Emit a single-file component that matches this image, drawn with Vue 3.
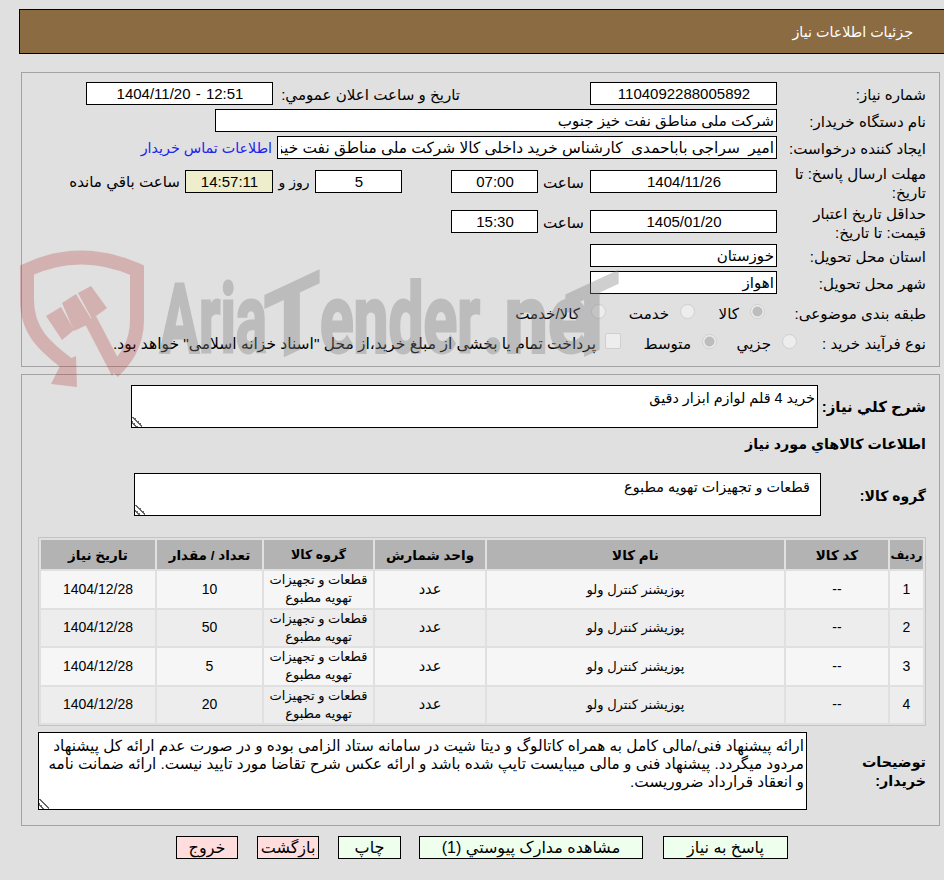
<script setup>
const rows = [
  { n: 1, qty: 10 },
  { n: 2, qty: 50 },
  { n: 3, qty: 5 },
  { n: 4, qty: 20 }
]
const creator = 'امیر  سراجی باباحمدی  کارشناس خرید داخلی کالا شرکت ملی مناطق نفت خیز جنوب'
const desc = 'خرید 4 قلم لوازم ابزار دقیق'
const group = '  قطعات و تجهیزات تهویه مطبوع'
const note = 'ارائه پیشنهاد فنی/مالی کامل به همراه کاتالوگ و دیتا شیت در سامانه ستاد الزامی بوده و در صورت عدم ارائه کل پیشنهاد مردود میگردد. پیشنهاد فنی و مالی میبایست تایپ شده باشد و ارائه عکس شرح تقاضا مورد تایید نیست. ارائه ضمانت نامه و انعقاد قرارداد ضروریست.'
</script>

<template>
  <div class="page">
    <header class="title"><span>جزئیات اطلاعات نیاز</span></header>

    <section class="panel first">
      <div class="row h27">
        <label class="lab">شماره نیاز:</label>
        <input class="fld mid w187" readonly value="1104092288005892" />
        <label class="pub">تاریخ و ساعت اعلان عمومي:</label>
        <input class="fld mid w187 stamp" readonly value="12:51 - 1404/11/20" />
      </div>
      <div class="row h27">
        <label class="lab">نام دستگاه خریدار:</label>
        <input class="fld w562" readonly value="شرکت ملی مناطق نفت خیز جنوب" />
      </div>
      <div class="row h34">
        <label class="lab">ایجاد کننده درخواست:</label>
        <input class="fld w500" readonly :value="creator" />
        <a class="contact">اطلاعات تماس خریدار</a>
      </div>
      <div class="row h40">
        <label class="lab two">مهلت ارسال پاسخ: تا تاریخ:</label>
        <input class="fld mid w187" readonly value="1404/11/26" />
        <span class="hour">ساعت</span>
        <input class="fld mid w87" readonly value="07:00" />
        <input class="fld mid w87 days" readonly value="5" />
        <span class="and">روز و</span>
        <input class="fld mid w88 remain" readonly value="14:57:11" />
        <span class="left-txt">ساعت باقي مانده</span>
      </div>
      <div class="row h34">
        <label class="lab two">حداقل تاریخ اعتبار قیمت: تا تاریخ:</label>
        <input class="fld mid w187" readonly value="1405/01/20" />
        <span class="hour">ساعت</span>
        <input class="fld mid w87" readonly value="15:30" />
      </div>
      <div class="row h27">
        <label class="lab">استان محل تحویل:</label>
        <input class="fld w187" readonly value="خوزستان" />
      </div>
      <div class="row h27">
        <label class="lab">شهر محل تحویل:</label>
        <input class="fld w187" readonly value="اهواز" />
      </div>
      <div class="row h30">
        <label class="lab lab-a">طبقه بندی موضوعی:</label>
        <span class="opt o70"><input type="radio" class="rd" disabled checked /><span>کالا</span></span>
        <span class="opt o89"><input type="radio" class="rd" disabled /><span>خدمت</span></span>
        <span class="opt"><input type="radio" class="rd" disabled /><span>کالا/خدمت</span></span>
      </div>
      <div class="row h30">
        <label class="lab lab-b">نوع فرآیند خرید :</label>
        <span class="opt o80"><input type="radio" class="rd" disabled /><span>جزيي</span></span>
        <span class="opt o96"><input type="radio" class="rd" disabled checked /><span>متوسط</span></span>
        <span class="opt"><input type="checkbox" class="cb" disabled /><span class="pay">پرداخت تمام یا بخشی از مبلغ خرید،از محل "اسناد خزانه اسلامی" خواهد بود.</span></span>
      </div>
    </section>

    <section class="panel second">
      <div class="row desc">
        <label class="blab b108">شرح کلي نياز:</label>
        <textarea class="area a1" readonly :value="desc"></textarea>
      </div>
      <h3 class="goods">اطلاعات کالاهاي مورد نياز</h3>
      <div class="row group">
        <label class="blab b105">گروه کالا:</label>
        <textarea class="area a2" readonly :value="group"></textarea>
      </div>
      <table class="items">
        <colgroup>
          <col class="c1" /><col class="c2" /><col class="c3" /><col class="c4" /><col class="c5" /><col class="c6" /><col class="c7" />
        </colgroup>
        <thead>
          <tr>
            <th class="tiny">ردیف</th><th>کد کالا</th><th>نام کالا</th><th>واحد شمارش</th><th class="narrow">گروه کالا</th><th>تعداد / مقدار</th><th>تاریخ نیاز</th>
          </tr>
        </thead>
        <tbody>
          <tr v-for="r in rows" :key="r.n">
            <td class="num">{{ r.n }}</td>
            <td class="num">--</td>
            <td>پوزیشنر کنترل ولو</td>
            <td class="unit">عدد</td>
            <td><span class="ln">قطعات و تجهیزات</span><span class="ln">تهویه مطبوع</span></td>
            <td class="num">{{ r.qty }}</td>
            <td class="num">1404/12/28</td>
          </tr>
        </tbody>
      </table>
      <div class="row notes">
        <label class="blab b119">توضیحات خریدار:</label>
        <textarea class="area a3" readonly :value="note"></textarea>
      </div>
    </section>

    <nav class="actions">
      <button class="btn green b125">پاسخ به نیاز</button>
      <button class="btn green b224">مشاهده مدارک پیوستي (1)</button>
      <button class="btn green b63">چاپ</button>
      <button class="btn red b62">بازگشت</button>
      <button class="btn red b62">خروج</button>
    </nav>

    <svg class="mark" width="944" height="880" viewBox="0 0 944 880">
      <g class="shield">
        <path class="ring" d="M70 366 C50 350 27 335 27 300 L27 270 Q80 245 137 270 L137 320 C137 345 125 360 113 372" />
        <polygon points="62,362 76,356 77,387 51,384" />
        <polygon points="46,316 61,307 74,330 62,340" />
        <polygon points="62,303 76,294 93,322 74,331" />
        <polygon points="78,293 91,286 107,308 92,319" />
        <polygon points="84,322 96,316 120,362 112,376" />
      </g>
      <g class="brand">
        <text x="160" y="352" textLength="107" lengthAdjust="spacingAndGlyphs">Aria</text>
        <text x="264" y="352" textLength="56" lengthAdjust="spacingAndGlyphs" transform="skewY(-25) translate(0 136)">T</text>
        <text x="320" y="352" textLength="160" lengthAdjust="spacingAndGlyphs">ender</text>
        <text x="482" y="352" textLength="108" lengthAdjust="spacingAndGlyphs">.ne</text>
        <text x="565" y="352" textLength="54" lengthAdjust="spacingAndGlyphs" transform="skewY(-25) translate(0 276)">T</text>
      </g>
    </svg>
  </div>
</template>

<style>
html, body { margin: 0; background: #e0e0e0; overflow: hidden; }
</style>

<style scoped>
.page {
  position: relative;
  width: 944px;
  height: 880px;
  box-sizing: border-box;
  padding-top: 9px;
  overflow: hidden;
  direction: rtl;
  background: #e0e0e0;
  color: #000;
  font-family: "Liberation Sans", "DejaVu Sans", sans-serif;
  font-size: 15.1px;
  line-height: 17px;
}
.title {
  box-sizing: border-box;
  height: 45px;
  margin-left: 19px;
  margin-right: -2px;
  border: 1px solid #000;
  background: #8b6b42;
  color: #fff;
  font-size: 14.3px;
  display: flex;
  align-items: center;
  padding-right: 32px;
  padding-top: 2px;
}
.panel {
  box-sizing: border-box;
  margin-left: 21px;
  margin-right: 4px;
  border: 1px solid #a3a3a3;
  padding-right: 13px;
}
.first { height: 295px; margin-top: 18px; padding-top: 9px; }
.second { height: 452px; margin-top: 7px; padding-top: 10px; }
.row { display: flex; align-items: flex-start; }
.h27 { height: 27px; }
.h30 { height: 30px; align-items: center; }
.h34 { height: 34px; }
.h40 { height: 40px; }
.lab { width: 149px; flex: none; box-sizing: border-box; padding-top: 4px; white-space: nowrap; }
.lab.two { padding-top: 0; margin-top: -6px; padding-left: 4px; white-space: normal; line-height: 19px; }
.lab-a { width: 161px; padding-top: 0; }
.lab-b { width: 129px; padding-top: 0; }
.fld {
  box-sizing: border-box;
  flex: none;
  height: 23px;
  border: 1px solid #000;
  background: #fff;
  color: #000;
  font: inherit;
  padding: 0 2px 0 3px;
  margin: 0;
  outline: none;
  direction: rtl;
}
.mid { text-align: center; font-size: 15px; }
.stamp { word-spacing: 1px; }
.w187 { width: 187px; }
.w562 { width: 562px; }
.w500 { width: 500px; font-size: 15.4px; }
.w87 { width: 87px; }
.w88 { width: 88px; }
.pub { margin: 4px 130px 0 6px; white-space: nowrap; width: 181px; }
.contact { color: #2222ee; font-size: 14.3px; margin-right: 5px; padding-top: 4px; white-space: nowrap; }
.hour { width: 46px; margin-right: 6px; padding-top: 4px; }
.days { margin-right: 49px; }
.and { width: 42px; text-align: center; padding-top: 4px; font-size: 14px; }
.remain { background: #eeeecc; }
.left-txt { margin-right: 5px; padding-top: 3px; white-space: nowrap; }
.opt { display: flex; align-items: center; gap: 11px; flex: none; }
.o70 { width: 70px; }
.o89 { width: 89px; }
.o80 { width: 80px; }
.o96 { width: 96px; }
.rd, .cb {
  appearance: none;
  -webkit-appearance: none;
  box-sizing: border-box;
  width: 15px;
  height: 15px;
  margin: -4px 0 0;
  flex: none;
  background: #ededed;
  border: 1px solid #cfcfcf;
}
.rd { border-radius: 50%; }
.rd:checked { background: radial-gradient(circle, #bdbdbd 0 4.5px, #ededed 5.5px); }
.cb { width: 16px; height: 16px; border-radius: 2px; }
.pay { margin-right: -2px; white-space: nowrap; font-size: 15.5px; }
.blab { font-weight: 700; flex: none; box-sizing: border-box; font-size: 15px; }
.b108 { width: 108px; padding-top: 13px; }
.b105 { width: 105px; padding-top: 15px; font-size: 14px; }
.b119 { width: 119px; padding-top: 21px; padding-left: 20px; line-height: 19px; font-size: 14.3px; }
.area {
  box-sizing: border-box;
  display: block;
  flex: none;
  border: 1px solid #000;
  background: #fff;
  color: #000;
  font: inherit;
  margin: 0;
  padding: 2px;
  outline: none;
  direction: rtl;
}
.area::-webkit-resizer {
  background: linear-gradient(45deg, transparent 0 18%, #666 18% 30%, transparent 30% 48%, #666 48% 60%, transparent 60%) left bottom / 10px 10px no-repeat;
}
.a1 { width: 687px; height: 43px; font-size: 14.4px; padding-top: 4px; }
.a2 { width: 687px; height: 43px; font-size: 14.4px; padding-top: 5px; }
.a3 { width: 769px; height: 78px; line-height: 18px; font-size: 15.3px; padding-top: 4px; }
.desc { height: 43px; }
.goods { margin: 8px 0 0; height: 37px; font-size: 14.25px; font-weight: 700; line-height: 17px; }
.group { height: 43px; }
.items {
  box-sizing: border-box;
  margin-top: 21px;
  width: 888px;
  table-layout: fixed;
  border: 1px solid #c4c4c4;
  border-spacing: 2px;
  border-collapse: separate;
  background: #e0e0e0;
  font-size: 13px;
}
.c1 { width: 33px; }
.c2 { width: 102px; }
.c3 { width: 297px; }
.c4 { width: 110px; }
.c5 { width: 109px; }
.c6 { width: 105px; }
.c7 { width: 114px; }
th {
  height: 29px;
  padding: 1px 0 0;
  box-sizing: border-box;
  background: #b3b3b3;
  font-weight: 700;
  font-size: 13.5px;
  text-align: center;
  white-space: nowrap;
}
th.tiny { font-size: 12px; }
th.narrow { font-size: 12.5px; }
td {
  height: 36.5px;
  padding: 0;
  text-align: center;
  vertical-align: middle;
}
td.num { font-size: 14px; }
td.unit { font-size: 14.5px; }
.ln { display: block; white-space: nowrap; line-height: 18px; font-size: 13px; }
tbody tr:nth-child(odd) td { background: #f6f6f6; }
tbody tr:nth-child(even) td { background: #ededed; }
.notes { margin-top: 6px; height: 78px; }
.actions {
  display: flex;
  gap: 19px;
  margin-top: 10px;
  margin-right: 156px;
}
.btn {
  box-sizing: border-box;
  height: 23px;
  border: 1px solid #000;
  border-radius: 0;
  margin: 0;
  padding: 0;
  color: #000;
  font: inherit;
  font-size: 16px;
  flex: none;
}
.green { background: #eeffee; }
.red { background: #ffdddd; }
.b125 { width: 125px; }
.b224 { width: 224px; margin-right: 1px; margin-left: -1px; }
.b63 { width: 63px; }
.b62 { width: 62px; }
.mark { position: absolute; left: 0; top: 0; pointer-events: none; direction: ltr; }
.shield { fill: #b42828; opacity: 0.25; }
.ring { fill: none; stroke: #b42828; stroke-width: 14; }
.brand { fill: #808080; stroke: #808080; stroke-width: 3; opacity: 0.38; font-family: Roboto, sans-serif; font-weight: 700; font-size: 96px; }
</style>
